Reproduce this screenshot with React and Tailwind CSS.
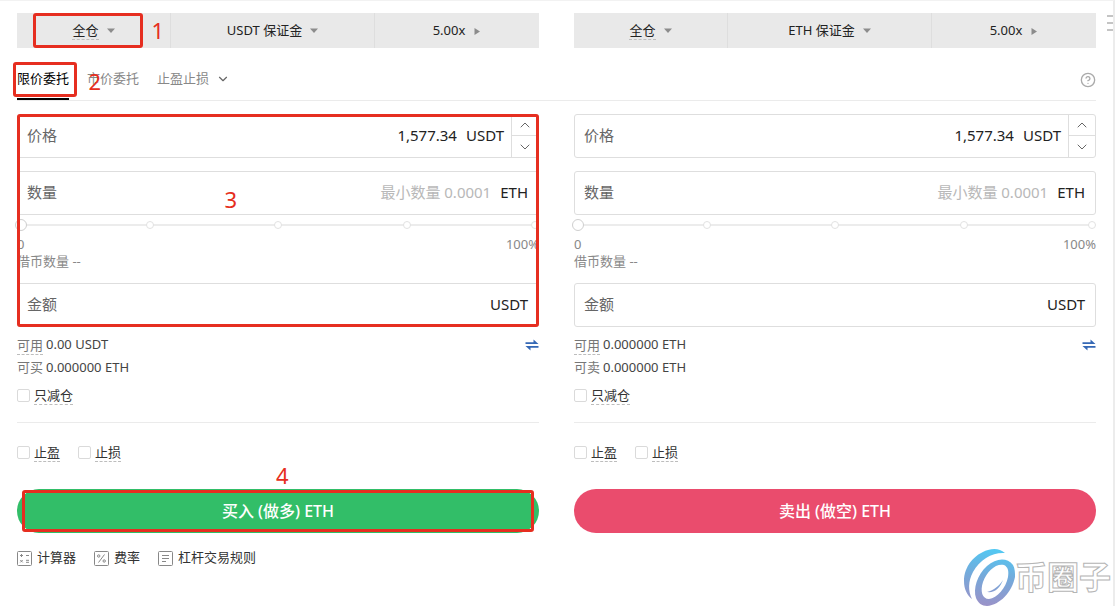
import { useState } from "react"
import { ChevronDown, ChevronUp, CircleHelp } from "lucide-react"

const sides = [
  { id: "buy", margin: "USDT 保证金", free: "0.00 USDT", maxLabel: "可买", action: "买入 (做多) ETH", color: "bg-[#32be68]", marked: true },
  { id: "sell", margin: "ETH 保证金", free: "0.000000 ETH", maxLabel: "可卖", action: "卖出 (做空) ETH", color: "bg-[#ea4c6d]", marked: false },
]

// Red guide frame with its step number
function Mark({ frame, step, at }) {
  return (
    <div className={`pointer-events-none absolute z-10 rounded-[3px] border-3 border-[#e62e20] ${frame}`}>
      <span className={`absolute text-[22px] leading-6 text-[#e62e20] ${at}`}>{step}</span>
    </div>
  )
}

function Caret({ right }) {
  return (
    <svg width="8" height="8" viewBox="0 0 8 8" fill="#8c8c8c" aria-hidden="true">
      {right ? <path d="M1.5 1v7L7 4.500z" /> : <path d="M0 1.500h8L4 6z" />}
    </svg>
  )
}

function MarginBar({ side }) {
  return (
    <div className="grid h-[35px] grid-cols-[154fr_204fr_164fr] bg-[#e9e9e9]">
      <div className="relative flex">
        <button className="flex flex-1 items-center justify-center gap-2 border-r border-[#dedede]">
          <span className="border-b border-dashed border-[#bdbdbd] leading-[18px]">全仓</span>
          <Caret />
        </button>
        {side.marked && <Mark frame="top-0 bottom-0 left-4 right-7" step="1" at="-right-6 top-0.5" />}
      </div>
      <button className="flex items-center justify-center gap-2 border-r border-[#dedede]">
        {side.margin}
        <Caret />
      </button>
      <button className="flex items-center justify-center gap-2">
        5.00x
        <Caret right />
      </button>
    </div>
  )
}

function Field({ id, label, unit, placeholder, defaultValue, stepper }) {
  return (
    <div className="flex h-11 rounded-[3px] border border-[#dedede] text-[15px]">
      <div className={`flex min-w-0 flex-1 items-center gap-[9px] pb-0.5 pl-[9px] ${stepper ? "pr-[7px]" : "pr-2.5"}`}>
        <label htmlFor={id} className="text-[#666]">{label}</label>
        <input
          id={id}
          placeholder={placeholder}
          defaultValue={defaultValue}
          className="min-w-0 flex-1 bg-transparent text-right text-[#222] outline-none placeholder:text-[#b8b8b8]"
        />
        <span className="text-[#222]">{unit}</span>
      </div>
      {stepper && (
        <div className="grid w-[27px] grid-rows-2 border-l border-[#dedede] text-[#666]">
          <button aria-label="+" className="flex items-center justify-center border-b border-[#dedede]">
            <ChevronUp size={16} strokeWidth={1.5} />
          </button>
          <button aria-label="-" className="flex items-center justify-center">
            <ChevronDown size={16} strokeWidth={1.5} />
          </button>
        </div>
      )}
    </div>
  )
}

function AmountSlider() {
  return (
    <div className="relative mt-1 h-3">
      <div className="absolute inset-x-1 top-[5px] h-0.5 bg-[#ececec]" />
      <div className="absolute inset-x-0 top-0.5 flex justify-between">
        {[0, 25, 50, 75, 100].map((n) => (
          <span key={n} className="h-2 w-2 rounded-full border border-[#e2e2e2] bg-white" />
        ))}
      </div>
      <input
        type="range"
        aria-label="0 - 100%"
        defaultValue="0"
        className="absolute -inset-x-0.5 top-0 h-3 appearance-none bg-transparent [&::-webkit-slider-thumb]:h-3 [&::-webkit-slider-thumb]:w-3 [&::-webkit-slider-thumb]:appearance-none [&::-webkit-slider-thumb]:rounded-full [&::-webkit-slider-thumb]:border [&::-webkit-slider-thumb]:border-[#cfcfcf] [&::-webkit-slider-thumb]:bg-white"
      />
    </div>
  )
}

function Check({ label }) {
  return (
    <label className="flex items-center gap-1 text-[#333]">
      <input type="checkbox" className="h-[13px] w-[13px] appearance-none rounded-xs border border-[#dadada] bg-white checked:bg-[#333]" />
      <span className="border-b border-dashed border-[#bdbdbd] leading-[18px]">{label}</span>
    </label>
  )
}

function OrderForm({ side }) {
  return (
    <form onSubmit={(e) => e.preventDefault()}>
      <div className="relative">
        <Field id={`${side.id}-price`} label="价格" unit="USDT" defaultValue="1,577.34" stepper />
        <div className="mt-[13px]">
          <Field id={`${side.id}-qty`} label="数量" unit="ETH" placeholder="最小数量 0.0001" />
        </div>
        <AmountSlider />
        <div className="mt-[5px] flex justify-between leading-[17px] text-[#888]">
          <span>0</span>
          <span>100%</span>
        </div>
        <p className="mb-[13px] leading-[17px] text-[#888]">借币数量 --</p>
        <Field id={`${side.id}-total`} label="金额" unit="USDT" />
        {side.marked && <Mark frame="inset-0" step="3" at="left-[40%] top-[70px] -ml-0.5" />}
      </div>

      <div className="mt-2 flex h-5 items-center justify-between text-[#444]">
        <p className="flex items-center gap-[3px]">
          <span className="border-b border-dashed border-[#bdbdbd] leading-[18px] text-[#777]">可用</span>
          {side.free}
        </p>
        <button aria-label="划转">
          <svg width="14" height="12" viewBox="0 0 14 12" fill="#3568b5" aria-hidden="true">
            <path d="M0.500 3.200H8.500V0.500L13.500 5H0.500zM13.500 8.800H5.500V11.500L0.500 7H13.500z" />
          </svg>
        </button>
      </div>
      <p className="mt-[3px] flex h-5 items-center gap-[3px] text-[#444]">
        <span className="text-[#777]">{side.maxLabel}</span>
        0.000000 ETH
      </p>
      <div className="mt-[7px] flex h-5">
        <Check label="只减仓" />
      </div>

      <div className="mt-[17px] flex border-t border-[#ebebeb] pt-[19px]">
        <div className="flex h-5 gap-[18px]">
          <Check label="止盈" />
          <Check label="止损" />
        </div>
      </div>

      <div className="relative mt-[27px]">
        <button className={`h-11 w-full rounded-full text-base font-medium text-white ${side.color}`}>{side.action}</button>
        {side.marked && <Mark frame="inset-x-[5px] inset-y-px" step="4" at="left-1/2 -top-[30px] -ml-0.5" />}
      </div>
    </form>
  )
}

const tools = [
  { label: "计算器", d: "M3 4.500h3M4.500 3v3M9 4.500h3M3.300 9l2.400 2.400M5.700 9l-2.400 2.400M9 9.300h3M9 11.300h3" },
  { label: "费率", d: "M10.500 3.500l-6 8M3.500 5a1.200 1.200 0 1 0 2.400 0a1.200 1.200 0 1 0-2.400 0M9 10a1.200 1.200 0 1 0 2.400 0a1.200 1.200 0 1 0-2.400 0" },
  { label: "杠杆交易规则", d: "M4 4.500h7M4 7.500h7M4 10.500h4" },
]

function Watermark() {
  return (
    <div className="absolute right-0.5 bottom-0 flex items-center">
      <svg width="51" height="58" viewBox="0 0 51 58" aria-hidden="true">
        <defs>
          <linearGradient id="wave" gradientUnits="userSpaceOnUse" x1="30" y1="0" x2="22" y2="58">
            <stop offset="0" stopColor="#50caf4" />
            <stop offset="0.500" stopColor="#75a9da" />
            <stop offset="1" stopColor="#9a92c8" />
          </linearGradient>
        </defs>
        <g fill="url(#wave)">
          <path d="M41 5C36 1 31 0 24 2C10 6 0 19 0 33C0 41 3 47 8 51C4 43 4 33 9 24C16 11 29 4 41 5Z" />
          <path fillRule="evenodd" d="M49 17C43 9 32 10 23 18C13 27 9 41 12 50C14 55 18 58 23 58C36 57 48 44 51 29C51 24 51 21 49 17ZM40 17C32 15 23 23 19 34C16 43 18 51 25 51C33 50 42 40 44 29C45 23 44 19 40 17Z" />
          <path d="M23 44C30 42 35 38 39 32C36 40 31 45 23 44Z" />
        </g>
      </svg>
      <span className="text-[32px] leading-10 font-bold text-white [-webkit-text-stroke:1px_#b5b5b5]">币圈子</span>
    </div>
  )
}

export default function App() {
  const [tab, setTab] = useState("限价委托")

  return (
    <main className="relative min-h-screen overflow-hidden border-t border-r-2 border-t-[#f2f2f2] border-r-[#ececec] bg-white pt-3 pr-[17px] pl-[17px] font-['Noto_Sans','Noto_Sans_CJK_SC',sans-serif] text-[13px] text-[#222]">
      <div className="grid grid-cols-2 gap-[35px]">
        {sides.map((side) => <MarginBar key={side.id} side={side} />)}
      </div>
      <button aria-label="菜单" className="absolute top-3.5 right-0 grid w-1.5 gap-[5px]">
        <i className="h-0.5 bg-[#c4c4c4]" />
        <i className="h-0.5 bg-[#c4c4c4]" />
        <i className="h-0.5 bg-[#c4c4c4]" />
      </button>

      {/* Order type */}
      <nav className="flex h-[53px] items-end justify-between border-b border-[#ebebeb]">
        <div className="flex gap-[18px]">
          {["限价委托", "市价委托", "止盈止损"].map((name) => (
            <div key={name} className="relative">
              <button
                onClick={() => setTab(name)}
                className={`flex h-10 items-center gap-[7px] border-b-2 ${tab === name ? "border-black text-black" : "border-transparent text-[#888]"}`}
              >
                {name}
                {name === "止盈止损" && <ChevronDown size={14} className="text-[#666]" />}
              </button>
              {name === "限价委托" && <Mark frame="-left-1 -right-2 top-0.5 bottom-[3px]" step="2" at="-right-[27px] top-1" />}
            </div>
          ))}
        </div>
        <button aria-label="帮助" className="mb-3 text-[#aaa]">
          <CircleHelp size={16} strokeWidth={2} />
        </button>
      </nav>

      <div className="mt-[13px] grid grid-cols-2 gap-[35px]">
        {sides.map((side) => <OrderForm key={side.id} side={side} />)}
      </div>

      <footer className="mt-[15px] flex gap-[18px]">
        {tools.map((tool) => (
          <a key={tool.label} href="#" className="flex h-5 items-center gap-[5px] text-[#333]">
            <svg width="15" height="15" viewBox="0 0 15 15" fill="none" stroke="#888" aria-hidden="true">
              <rect x="0.500" y="0.500" width="14" height="14" rx="1" />
              <path d={tool.d} />
            </svg>
            {tool.label}
          </a>
        ))}
      </footer>
      <Watermark />
    </main>
  )
}
